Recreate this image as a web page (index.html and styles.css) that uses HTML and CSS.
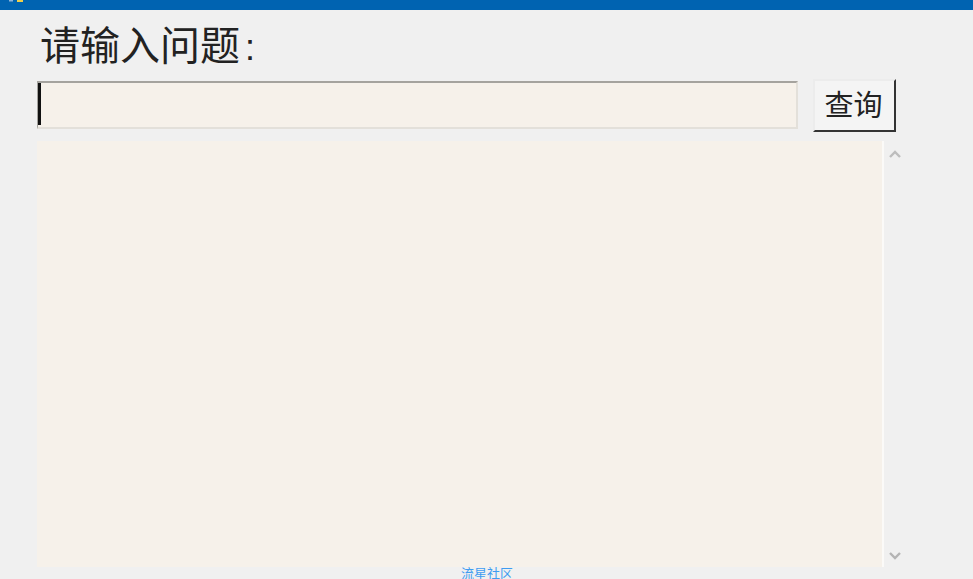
FILE: index.html
```html
<!DOCTYPE html>
<html lang="zh-CN">
<head>
    <meta charset="UTF-8">
    <title>查询</title>
    <link rel="stylesheet" href="styles.css">
</head>
<body>
    <div class="titleBar">
        <svg class="appIcon" width="18" height="3" viewBox="0 0 18 3">
            <rect x="2" y="0" width="4" height="1.5" fill="#8fb4d8"/>
            <rect x="10" y="0" width="6" height="2" fill="#f0cf4a"/>
        </svg>
    </div>
    <div class="mainDiv">
        <div class="promptLabel">请输入问题<span class="promptColon">:</span></div>
        <div class="searchRow">
            <div class="questionInput"><span class="caret"></span></div>
            <button class="searchButton">查询</button>
        </div>
        <div class="resultRow">
            <div class="resultBox"></div>
            <div class="scrollBar">
                <svg width="14" height="10" viewBox="0 0 14 10"><path d="M2 8 L7 3 L12 8" fill="none" stroke="#bdbdbd" stroke-width="2.4"/></svg>
                <svg width="14" height="10" viewBox="0 0 14 10"><path d="M2 2 L7 7 L12 2" fill="none" stroke="#b4b4b4" stroke-width="2.4"/></svg>
            </div>
        </div>
        <div class="footerText">流星社区</div>
    </div>
</body>
</html>
```

FILE: styles.css
```css
html, body {
    margin: 0;
    height: 579px;
    overflow: hidden;
}
body {
    background-color: #f0f0f0;
    font-family: "Liberation Sans", "Noto Sans CJK SC", sans-serif;
    color: #222;
}
.titleBar {
    display: flex;
    height: 10px;
    background-color: #0063b1;
}
.appIcon {
    display: block;
    margin-left: 7px;
}
.mainDiv {
    display: flex;
    flex-direction: column;
    padding-left: 37px;
}
.promptLabel {
    box-sizing: border-box;
    height: 70px;
    padding-top: 1px;
    padding-left: 3px;
    font-size: 40px;
    line-height: 70px;
}
.promptColon {
    margin-left: 5px;
    font-size: 36px;
}
.searchRow {
    display: flex;
    align-items: flex-start;
}
.questionInput {
    box-sizing: border-box;
    width: 761px;
    height: 48px;
    margin-top: 1px;
    background-color: #f6f1ea;
    border: 2px solid #e3e0da;
    border-top-color: #a5a39e;
    border-left: 1px solid #a5a39e;
}
.caret {
    display: block;
    width: 3px;
    height: 42px;
    background-color: #111;
}
.searchButton {
    box-sizing: border-box;
    width: 83px;
    height: 53px;
    margin-left: 15px;
    margin-top: -1px;
    padding: 0 2px 5px 0;
    background-color: #f4f4f4;
    border: 2px solid #333;
    border-top-color: #ececec;
    border-left-color: #ececec;
    font-family: inherit;
    font-size: 29px;
    color: #222;
}
.resultRow {
    display: flex;
    height: 426px;
    margin-top: 9px;
}
.resultBox {
    width: 845px;
    background-color: #f6f1ea;
    border-right: 2px solid #fbfaf8;
}
.scrollBar {
    display: flex;
    flex-direction: column;
    justify-content: space-between;
    padding: 8px 0 6px 4px;
}
.scrollBar svg {
    display: block;
}
.footerText {
    width: 900px;
    text-align: center;
    font-size: 13px;
    line-height: 14px;
    color: #3f9cf0;
}
```
